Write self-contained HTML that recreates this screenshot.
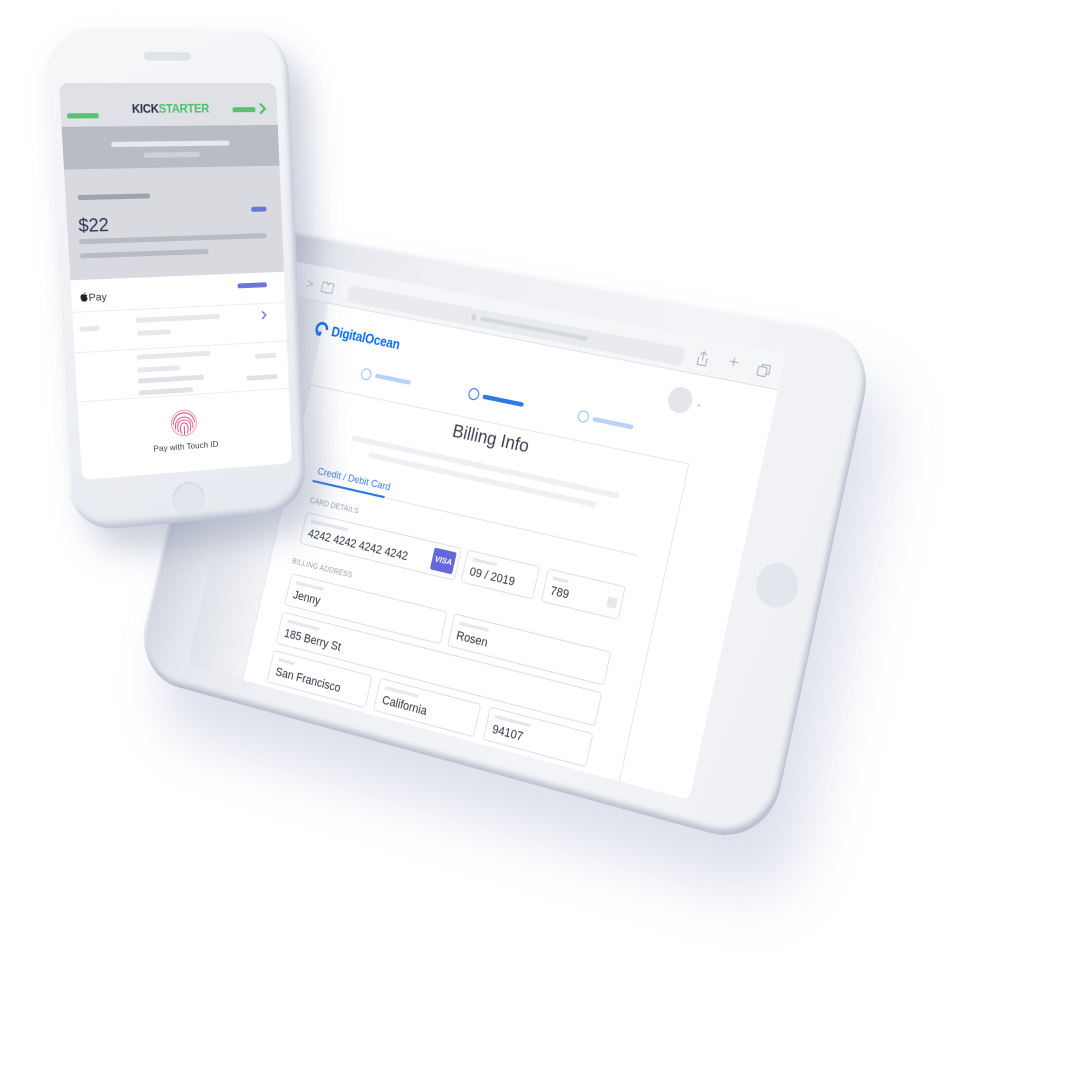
<!DOCTYPE html>
<html><head><meta charset="utf-8">
<style>
html,body{margin:0;padding:0;background:#fff;}
body{width:1090px;height:1090px;position:relative;overflow:hidden;font-family:"Liberation Sans",sans-serif;}
.abs{position:absolute;}
#tab{position:absolute;left:0;top:0;width:520px;height:390px;transform-origin:0 0;
transform:matrix3d(0.8376,0.12079,0,-0.00016994,-0.24636,1.02210,0,-0.00002846,0,0,1,0,281,259,0,1);}
#tbody{position:absolute;left:-56px;top:-28px;width:654px;height:440px;border-radius:52px;
background:linear-gradient(100deg,#b3b9c8 0%,#c2c7d3 6%,#d2d6df 9%,#e6e8ee 16%,#eef0f4 30%,#f3f4f7 70%,#eef0f4 100%);
box-shadow:inset -3px -4px 5px rgba(120,130,160,.45),inset 2px 2px 3px rgba(255,255,255,.9),30px 40px 50px rgba(140,150,185,.28);}
#screen{position:absolute;left:0;top:0;width:520px;height:390px;background:#fff;border-radius:7px;overflow:hidden;}
.fld{position:absolute;height:30px;border:1px solid #dfe2e7;border-radius:3px;background:#fff;box-sizing:border-box;font-size:11px;color:#2e3242;}
.fld i{position:absolute;left:6px;top:5px;width:40px;height:3px;background:#e6e8ec;}
.fld span{position:absolute;left:6px;top:12px;}
.lbl{position:absolute;font-size:7px;color:#9aa0ab;letter-spacing:.2px;}
#ph{position:absolute;left:0;top:0;width:220px;height:390px;transform-origin:0 0;
transform:matrix3d(1.0442,0.01736,0,0.0002094,0.06526,1.05464,0,0.00007646,0,0,1,0,59,83,0,1);}
#pbody{position:absolute;left:-14px;top:-55px;width:248px;height:497px;border-radius:46px;
background:linear-gradient(160deg,#f6f7f9 0%,#eef0f4 60%,#e6e9ef 100%);
box-shadow:inset -3px -5px 6px rgba(150,160,185,.55),inset 2px 2px 3px #fff,18px 24px 34px rgba(110,120,155,.35);}
#pscreen{position:absolute;left:0;top:0;width:220px;height:390px;border-radius:9px;overflow:hidden;background:#fff;}
.b{position:absolute;height:5px;border-radius:2px;}
</style></head><body>

<div id="tab">
  <div id="tbody"></div>
  <div class="abs" style="left:538px;top:177px;width:38px;height:38px;border-radius:50%;background:#e3e6ec;"></div>
  <div id="screen">
    <div class="abs" style="left:0;top:0;width:62px;height:390px;background:linear-gradient(to right,#e0e3e9,#f2f3f6);"></div>
    <div class="abs" style="left:0;top:0;width:520px;height:32px;background:#f5f6f8;border-bottom:1px solid #e2e4e9;"></div>
    <div class="abs" style="left:34px;top:11px;font-size:12px;color:#b3b7c0;">&gt;</div>
    <svg class="abs" style="left:50px;top:13px" width="14" height="12" viewBox="0 0 14 12"><path d="M1 1h5l1 2 1-2h5v9H8l-1 1-1-1H1z" fill="none" stroke="#b3b7c0" stroke-width="1"/></svg>
    <div class="abs" style="left:80px;top:12px;width:347px;height:16px;background:#e9ebef;border-radius:4px;"></div>
    <div class="abs" style="left:213px;top:17px;width:4px;height:6px;background:#d3d6dc;border-radius:1px;"></div>
    <div class="abs" style="left:222px;top:18px;width:110px;height:4px;background:#d6d9df;border-radius:2px;"></div>
    <svg class="abs" style="left:439px;top:11px" width="12" height="14" viewBox="0 0 12 14"><path d="M6 1v8M3 4l3-3 3 3M2 6v7h8V6" fill="none" stroke="#b0b4bd" stroke-width="1"/></svg>
    <div class="abs" style="left:470px;top:8px;font-size:15px;color:#b0b4bd;font-weight:300;">+</div>
    <svg class="abs" style="left:497px;top:12px" width="13" height="13" viewBox="0 0 13 13"><rect x="1" y="3.5" width="8" height="8" rx="1.5" fill="none" stroke="#b0b4bd"/><path d="M4 3.5V1.5h7.5V9H9" fill="none" stroke="#b0b4bd"/></svg>

    <svg class="abs" style="left:54px;top:50px" width="16" height="16" viewBox="0 0 16 16"><path d="M7 13 A5.5 5.5 0 1 1 12.5 7.5" fill="none" stroke="#0a6cf2" stroke-width="2.6"/><rect x="5" y="10" width="2.5" height="2.5" fill="#0a6cf2"/><rect x="2.5" y="12" width="2" height="2" fill="#0a6cf2"/><rect x="1" y="10" width="1.5" height="1.5" fill="#0a6cf2"/></svg>
    <div class="abs" style="left:72px;top:51px;font-size:12.5px;font-weight:bold;color:#0a6cf2;letter-spacing:-.2px;">DigitalOcean</div>

    <div class="abs" style="left:113px;top:85px;width:9px;height:9px;border:1.5px solid #9dbff5;border-radius:50%;"></div>
    <div class="abs" style="left:128px;top:88px;width:38px;height:4px;background:#bad2f8;border-radius:2px;"></div>
    <div class="abs" style="left:227px;top:83px;width:9px;height:9px;border:1.5px solid #2f7ae5;border-radius:50%;"></div>
    <div class="abs" style="left:242px;top:87px;width:42px;height:4px;background:#2f7ae5;border-radius:2px;"></div>
    <div class="abs" style="left:339px;top:83px;width:9px;height:9px;border:1.5px solid #9dbff5;border-radius:50%;"></div>
    <div class="abs" style="left:354px;top:87px;width:40px;height:4px;background:#bad2f8;border-radius:2px;"></div>
    <div class="abs" style="left:421px;top:46px;width:23px;height:23px;background:#e4e6ea;border-radius:50%;"></div>
    <div class="abs" style="left:448px;top:54px;font-size:7px;color:#9aa0ab;">&#8964;</div>

    <div class="abs" style="left:62px;top:110px;width:390px;height:290px;border:1px solid #e6e8ec;border-bottom:none;"></div>
    <div class="abs" style="left:159px;top:115px;width:200px;text-align:center;font-size:17px;color:#3b4050;">Billing Info</div>
    <div class="abs" style="left:119px;top:148px;width:276px;height:5px;background:#eef0f3;border-radius:2px;"></div>
    <div class="abs" style="left:140px;top:160px;width:235px;height:5px;background:#eef0f3;border-radius:2px;"></div>

    <div class="abs" style="left:91px;top:182px;font-size:9.5px;color:#3a7bea;">Credit / Debit Card</div>
    <div class="abs" style="left:88px;top:197px;width:337px;height:1px;background:#e3e5ea;"></div>
    <div class="abs" style="left:88px;top:196px;width:78px;height:2px;background:#2f7ae5;"></div>
    <div class="lbl" style="left:90px;top:212px;">CARD DETAILS</div>

    <div class="fld" style="left:89px;top:226px;width:166px;"><i></i><span>4242 4242 4242 4242</span>
      <div class="abs" style="left:138px;top:4px;width:23px;height:20px;background:#6369d8;border-radius:2px;color:#fff;font-size:7.5px;font-weight:bold;font-style:italic;text-align:center;line-height:20px;">VISA</div></div>
    <div class="fld" style="left:261px;top:226px;width:74px;"><i style="width:25px"></i><span>09 / 2019</span></div>
    <div class="fld" style="left:343px;top:226px;width:77px;"><i style="width:15px"></i><span>789</span>
      <div class="abs" style="left:62px;top:11px;width:9px;height:9px;background:#e6e8ec;"></div></div>

    <div class="lbl" style="left:86px;top:270px;">BILLING ADDRESS</div>
    <div class="fld" style="left:88px;top:284px;width:167px;"><i style="width:30px"></i><span>Jenny</span></div>
    <div class="fld" style="left:262px;top:284px;width:158px;"><i style="width:30px"></i><span>Rosen</span></div>
    <div class="fld" style="left:88px;top:320px;width:332px;"><i style="width:35px"></i><span>185 Berry St</span></div>
    <div class="fld" style="left:88px;top:356px;width:107px;"><i style="width:18px"></i><span>San Francisco</span></div>
    <div class="fld" style="left:203px;top:356px;width:105px;"><i style="width:35px"></i><span>California</span></div>
    <div class="fld" style="left:317px;top:356px;width:103px;"><i style="width:35px"></i><span>94107</span></div>
  </div>
</div>

<div id="ph">
  <div id="pbody"></div>
  <div class="abs" style="left:85px;top:-30px;width:48px;height:8px;border-radius:4px;background:#e0e3e9;"></div>
  <div class="abs" style="left:91px;top:401px;width:34px;height:34px;border-radius:50%;background:#e3e6eb;box-shadow:inset 0 1px 2px rgba(150,155,170,.3);"></div>
  <div id="pscreen">
    <div class="abs" style="left:0;top:0;width:220px;height:42px;background:#dfe1e6;border-bottom:1px solid #b5b9c3;"></div>
    <div class="b" style="left:6px;top:29px;width:31px;background:#5cc073;"></div>
    <div class="abs" style="left:52px;top:20px;width:115px;text-align:center;font-size:11.5px;font-weight:bold;letter-spacing:-.3px;"><span style="color:#2b2f4b">KICK</span><span style="color:#4cbf6b">STARTER</span></div>
    <div class="b" style="left:173px;top:24px;width:24px;background:#5cc073;"></div>
    <svg class="abs" style="left:200px;top:19px" width="9" height="13" viewBox="0 0 9 13"><path d="M2 1.5l5 5-5 5" fill="none" stroke="#4cbf6b" stroke-width="2.2"/></svg>
    <div class="abs" style="left:0;top:43px;width:220px;height:40px;background:#b9bcc4;"></div>
    <div class="b" style="left:48px;top:57px;width:120px;background:#e8e9ec;"></div>
    <div class="b" style="left:80px;top:68px;width:57px;background:#cfd1d6;"></div>
    <div class="abs" style="left:0;top:83px;width:220px;height:108px;background:#d8dadf;"></div>
    <div class="b" style="left:12px;top:108px;width:72px;background:#9da2ac;"></div>
    <div class="abs" style="left:11px;top:128px;font-size:18px;color:#30344f;">$22</div>
    <div class="b" style="left:188px;top:124px;width:16px;background:#6a78d8;"></div>
    <div class="b" style="left:11px;top:151px;width:192px;background:#b8bbc3;"></div>
    <div class="b" style="left:11px;top:165px;width:130px;background:#b8bbc3;"></div>
    <div class="abs" style="left:8px;top:203px;font-size:10.5px;color:#2e3242;"><svg width="9" height="10" viewBox="0 0 9 10" style="vertical-align:-1px"><path d="M4.5 2.5C3.5 1.8 1 2 1 5c0 2.2 1.5 4.5 2.4 4.5.6 0 .7-.3 1.1-.3s.5.3 1.1.3C6.5 9.5 8 7.4 8 6.3 7 5.8 6.8 4.2 7.8 3.5 7.2 2.6 6 2.3 4.5 2.5zM4.6 2.2C4.6 1.2 5.3.5 6.2.4 6.2 1.4 5.5 2.2 4.6 2.2z" fill="#222"/></svg>Pay</div>
    <div class="b" style="left:170px;top:201px;width:31px;background:#6a74d9;"></div>
    <div class="abs" style="left:0;top:222px;width:220px;height:1px;background:#eceef1;"></div>
    <div class="b" style="left:6px;top:237px;width:20px;background:#e6e8ec;"></div>
    <div class="b" style="left:63px;top:231px;width:87px;background:#e6e8ec;"></div>
    <div class="b" style="left:64px;top:244px;width:34px;background:#e6e8ec;"></div>
    <svg class="abs" style="left:193px;top:229px" width="7" height="11" viewBox="0 0 7 11"><path d="M1.5 1.5l4 4-4 4" fill="none" stroke="#6a78d8" stroke-width="1.5"/></svg>
    <div class="abs" style="left:0;top:262px;width:220px;height:1px;background:#eceef1;"></div>
    <div class="b" style="left:62px;top:268px;width:76px;background:#e6e8ec;"></div>
    <div class="b" style="left:62px;top:281px;width:44px;background:#e6e8ec;"></div>
    <div class="b" style="left:62px;top:292px;width:68px;background:#e0e2e7;"></div>
    <div class="b" style="left:62px;top:304px;width:56px;background:#e0e2e7;"></div>
    <div class="b" style="left:185px;top:274px;width:23px;background:#e6e8ec;"></div>
    <div class="b" style="left:175px;top:296px;width:33px;background:#e0e2e7;"></div>
    <div class="abs" style="left:0;top:311px;width:220px;height:1px;background:#eceef1;"></div>
    <svg class="abs" style="left:93px;top:326px" width="28" height="28" viewBox="0 0 28 28">
      <g fill="none" stroke="#e0457b" stroke-width="1">
        <circle cx="14" cy="14" r="13" stroke="#f08fb0"/>
        <path d="M4 10a11 11 0 0 1 20 0M3 15a11 11 0 0 1 22-1M5 20c-1-7 3-12 9-12s10 5 9 12M8 23c-2-8 0-12 6-12s8 4 6 12M11 25c-2-6-1-11 3-11s5 5 3 11M14 17v9"/>
      </g></svg>
    <div class="abs" style="left:48px;top:359px;width:120px;text-align:center;font-size:8.5px;color:#3a3e4d;">Pay with Touch ID</div>
  </div>
</div>
</body></html>
